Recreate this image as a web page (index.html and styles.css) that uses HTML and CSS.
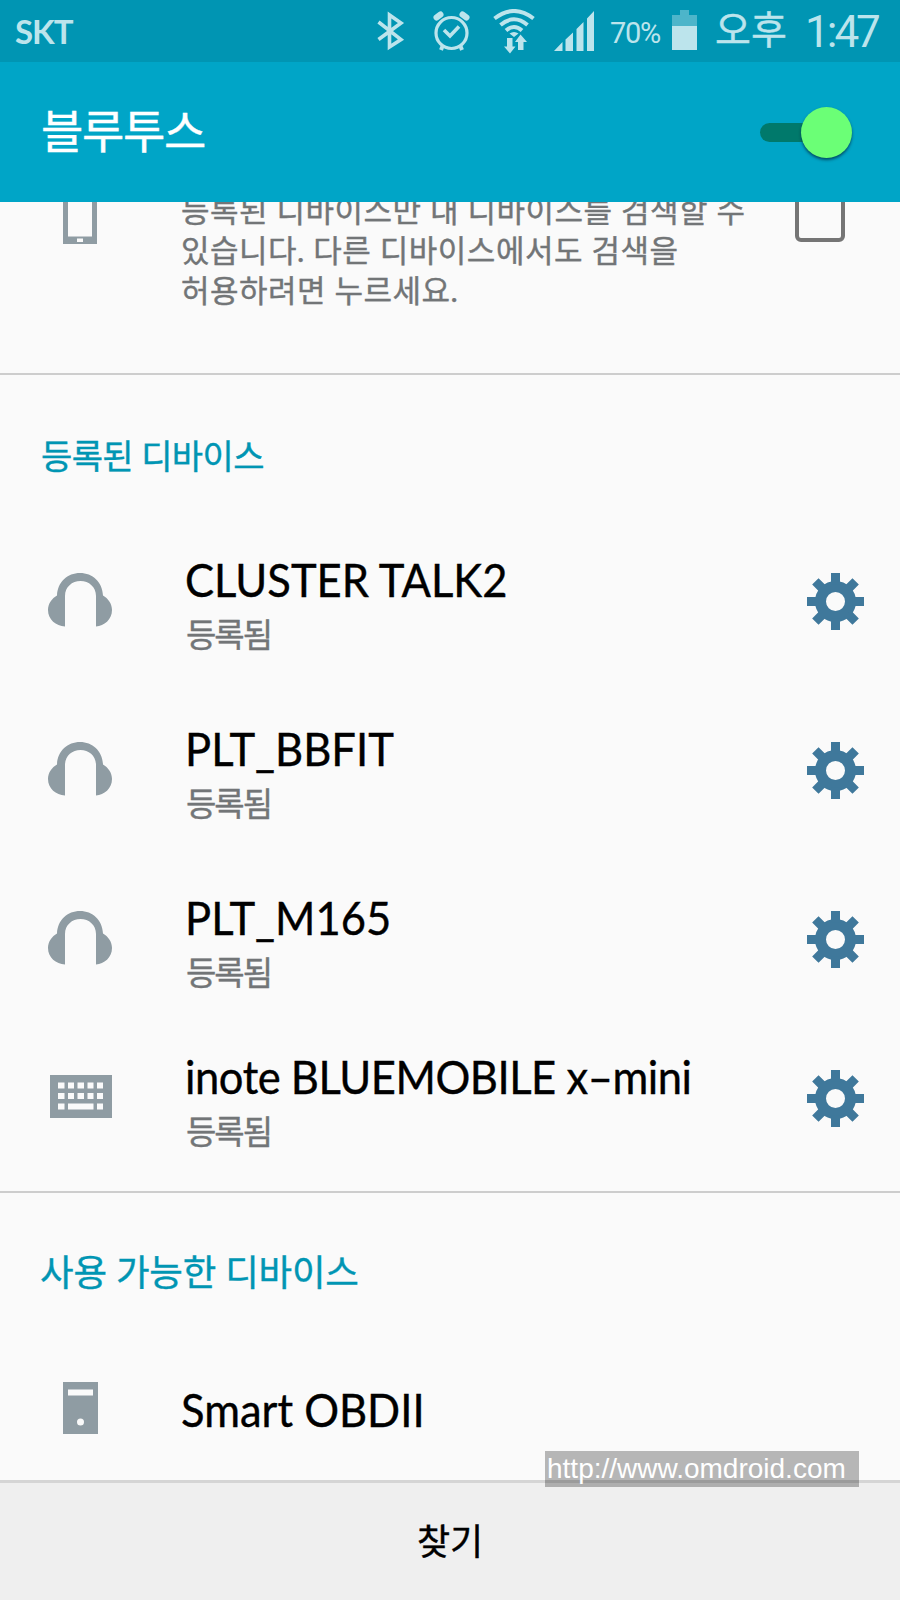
FILE: index.html
```html
<!DOCTYPE html>
<html lang="ko">
<head>
    <meta charset="UTF-8">
    <meta name="viewport" content="width=device-width, initial-scale=1.0">
    <title>블루투스</title>
    <link rel="stylesheet" href="styles.css">
</head>
<body>
<!-- Shared icons -->
<svg class="sprite" width="0" height="0">
    <symbol id="headset" viewBox="0 0 64 54">
        <path d="M17 53.500C8 53 0 46.500 0 37C0 30.500 4 25.500 9 22.500C9.500 9 19.500 0 32 0S54.500 9 55 22.500C60 25.500 64 30.500 64 37C64 46.500 56 53 48 53.500V23C48 14 41 8 32.500 8S17 14 17 23Z"/>
    </symbol>
    <symbol id="keyboard" viewBox="0 0 62 43">
        <path fill-rule="evenodd" d="M0 0H62V43H0ZM8 7.500v6h6.500v-6ZM18 7.500v6h6v-6ZM27.500 7.500v6h6.500v-6ZM37.500 7.500v6h6v-6ZM47 7.500v6h6v-6ZM8 18v6h6.500v-6ZM18 18v6h6v-6ZM27.500 18v6h6.500v-6ZM37.500 18v6h6v-6ZM47 18v6h6v-6ZM8 28.500v6h6.500v-6ZM18 28.500v6h25.500v-6ZM47 28.500v6h6v-6Z"/>
    </symbol>
    <symbol id="gear" viewBox="-28.500 -28.500 57 57">
        <circle r="15" fill="none" stroke="currentColor" stroke-width="11"/>
        <path d="M-4.500-28.500h9V-17h-9ZM-4.500 17h9v11.500h-9ZM-28.500-4.500V4.500H-17v-9ZM17-4.500V4.500H28.500v-9Z"/>
        <path transform="rotate(45)" d="M-4.500-28.500h9V-17h-9ZM-4.500 17h9v11.500h-9ZM-28.500-4.500V4.500H-17v-9ZM17-4.500V4.500H28.500v-9Z"/>
    </symbol>
</svg>

<div id="statusbar">
    <span class="carrier">SKT</span>
    <svg class="bluetooth" width="28" height="40" viewBox="0 0 28 40">
        <path fill="none" stroke="currentColor" stroke-width="3.600" d="M1.500 11L24 28.500L12.500 36V4L24 12L1.500 28.500"/>
    </svg>
    <svg class="alarm" width="37" height="40" viewBox="0 0 37 40">
        <g fill="none" stroke="currentColor">
            <circle cx="18.500" cy="22" r="15.500" stroke-width="3.200"/>
            <path stroke-width="3.600" d="M11 19L17 25L26 15.500"/>
            <path stroke-width="6" stroke-linecap="round" d="M3.500 6.500L7.500 3.500M29.500 3.500L33.500 6.500"/>
            <path stroke-width="4" d="M10 34L8 39M27 34L29 39"/>
        </g>
    </svg>
    <svg class="wifi" width="42" height="45" viewBox="0 0 42 45">
        <g fill="none" stroke="currentColor" stroke-width="4">
            <path d="M1.500 9.500Q21-5.500 40.500 9.500"/>
            <path d="M7.500 16Q21 4.500 34.500 16"/>
            <path d="M13 21.500Q21 14.500 29 21.500"/>
        </g>
        <path fill="currentColor" d="M21 28L16.500 24.500Q21 21.500 25.500 24.500ZM14 29h5.500v8.500h3L17 44.500L11 37.500h3ZM25 41h5.500V33h3.500L27.500 25.500L22 33h3Z"/>
    </svg>
    <svg class="signal" width="41" height="40" viewBox="0 0 41 40">
        <path fill="currentColor" d="M0 40L8.500 31V40ZM11.500 28.500L19 21.500V40H11.500ZM22.500 18L29.500 11V40H22.500ZM33 7.500L40 0V40H33Z"/>
    </svg>
    <span class="percent">70%</span>
    <svg class="battery" width="25" height="40" viewBox="0 0 25 40">
        <path fill="#4db5ca" d="M0 5H8V0H17V5H25V16H0Z"/>
        <path fill="currentColor" d="M0 16H25V40H0Z"/>
    </svg>
    <span class="ampm">오후</span>
    <span class="clock">1:47</span>
</div>

<div id="header">
    <h1>블루투스</h1>
    <div class="switch"><div class="thumb"></div></div>
</div>

<div id="container">
    <div class="visibility">
        <div class="icon">
            <svg width="34" height="64" viewBox="0 0 34 64">
                <path fill-rule="evenodd" d="M0 0H34V64H0ZM5 8V56.500H29V8ZM14 58.500v3.500h6v-3.500Z"/>
            </svg>
        </div>
        <p>등록된 디바이스만 내 디바이스를 검색할 수<br>있습니다. 다른 디바이스에서도 검색을<br>허용하려면 누르세요.</p>
        <div class="checkbox"></div>
    </div>

    <h2 class="paired-title">등록된 디바이스</h2>
    <div class="devices">
        <div class="device">
            <div class="icon"><svg width="64" height="54"><use href="#headset"/></svg></div>
            <div class="info">
                <div class="name">CLUSTER TALK2</div>
                <div class="state">등록됨</div>
            </div>
            <svg class="gear" width="57" height="57"><use href="#gear"/></svg>
        </div>
        <div class="device">
            <div class="icon"><svg width="64" height="54"><use href="#headset"/></svg></div>
            <div class="info">
                <div class="name">PLT_BBFIT</div>
                <div class="state">등록됨</div>
            </div>
            <svg class="gear" width="57" height="57"><use href="#gear"/></svg>
        </div>
        <div class="device">
            <div class="icon"><svg width="64" height="54"><use href="#headset"/></svg></div>
            <div class="info">
                <div class="name">PLT_M165</div>
                <div class="state">등록됨</div>
            </div>
            <svg class="gear" width="57" height="57"><use href="#gear"/></svg>
        </div>
        <div class="device short">
            <div class="icon"><svg width="62" height="43"><use href="#keyboard"/></svg></div>
            <div class="info">
                <div class="name">inote BLUEMOBILE x–mini</div>
                <div class="state">등록됨</div>
            </div>
            <svg class="gear" width="57" height="57"><use href="#gear"/></svg>
        </div>
    </div>

    <h2 class="available-title">사용 가능한 디바이스</h2>
    <div class="device available">
        <div class="icon">
            <svg width="35" height="52" viewBox="0 0 35 52">
                <path fill-rule="evenodd" d="M0 0H35V52H0ZM5 7.500V13.500H30V7.500ZM14 40a3.500 3.500 0 1 0 7 0a3.500 3.500 0 1 0-7 0Z"/>
            </svg>
        </div>
        <div class="name">Smart OBDII</div>
    </div>
</div>

<div id="footer">
    <button>찾기</button>
    <div class="watermark">http://www.omdroid.com</div>
</div>
</body>
</html>
```
FILE: styles.css
```css
* {
    box-sizing: border-box;
}

body {
    display: flex;
    flex-direction: column;
    width: 900px;
    height: 1600px;
    margin: 0;
    overflow: hidden;
    background-color: #fafafa;
    font-family: Lato, 'Noto Sans CJK KR', sans-serif;
}

h1, h2, p {
    margin: 0;
    font-weight: 400;
    white-space: nowrap;
}

h1, h2, p, .state, .name, .ampm, #footer button {
    -webkit-text-stroke: 0.4px currentColor;
}

svg {
    display: block;
    flex: none;
}

.sprite {
    position: absolute;
}

#statusbar {
    display: flex;
    align-items: center;
    flex: none;
    height: 62px;
    padding-left: 15px;
    background-color: #0095b3;
    color: #bce4ec;
    white-space: nowrap;
    line-height: 62px;
}

.carrier {
    width: 362px;
    font-size: 33px;
    font-weight: 700;
    letter-spacing: -1px;
}

.alarm {
    margin-left: 28px;
}

.wifi {
    margin-left: 23px;
}

.signal {
    margin-left: 19px;
}

.percent {
    width: 62px;
    margin-left: 15px;
    padding-top: 3px;
    font-family: Roboto, sans-serif;
    font-size: 29px;
    letter-spacing: -1.3px;
}

.battery {
    margin-top: -2px;
}

.ampm {
    width: 90px;
    margin-left: 18px;
    padding-bottom: 4px;
    font-size: 39px;
}

.clock {
    padding-top: 2px;
    font-family: Roboto, sans-serif;
    font-size: 44px;
    letter-spacing: -3px;
}

#header {
    display: flex;
    align-items: center;
    justify-content: space-between;
    flex: none;
    height: 140px;
    padding: 0 48px 0 41px;
    background-color: #00a5c7;
}

#header h1 {
    color: #fff;
    font-size: 46px;
    line-height: 138px;
    height: 140px;
    letter-spacing: -1.3px;
}

.switch {
    position: relative;
    width: 92px;
    height: 19px;
    border-radius: 10px;
    background-color: #00796b;
}

.thumb {
    position: absolute;
    top: -16px;
    right: 0;
    width: 51px;
    height: 51px;
    border-radius: 50%;
    background-color: #6bff76;
    box-shadow: 0 2px 3px rgba(0, 40, 60, 0.7);
}

#container {
    flex: 1;
}

.icon {
    display: flex;
    justify-content: center;
    width: 160px;
    color: #8f9ca3;
    fill: currentColor;
}

/* Scrolled under the header, so the content hangs from the bottom */
.visibility {
    display: flex;
    align-items: flex-end;
    height: 173px;
    overflow: hidden;
    border-bottom: 2px solid #cdcdcd;
}

.visibility .icon {
    margin-bottom: 129px;
}

.visibility p {
    width: 635px;
    padding: 0 0 63px 21px;
    color: #727577;
    font-size: 31px;
    line-height: 40px;
    letter-spacing: 0.5px;
}

.checkbox {
    width: 50px;
    height: 50px;
    margin-bottom: 131px;
    border: 4px solid #757575;
    border-radius: 6px;
}

h2 {
    padding-left: 41px;
    color: #0095b3;
    font-size: 34px;
}

.paired-title {
    height: 142px;
    line-height: 162px;
    letter-spacing: -0.6px;
}

.devices {
    padding-bottom: 18px;
    border-bottom: 2px solid #cdcdcd;
}

.device {
    display: flex;
    align-items: center;
    height: 169px;
}

.device.short {
    height: 149px;
}

.device .icon {
    margin-top: -4px;
}

.device.short .icon {
    padding-left: 1px;
}

.info {
    width: 622px;
    padding: 5px 0 0 25px;
}

.name {
    height: 58px;
    color: #000;
    font-size: 47px;
    line-height: 58px;
    white-space: nowrap;
    transform: scaleX(0.926);
    transform-origin: left;
}

.short .name {
    letter-spacing: -0.5px;
}

.state {
    height: 50px;
    padding-left: 1px;
    color: #727577;
    font-size: 33px;
    line-height: 52px;
    letter-spacing: -2px;
}

.gear {
    margin-left: 25px;
    color: #3f789b;
    fill: currentColor;
}

.available-title {
    height: 142px;
    padding-left: 40px;
    font-size: 36.5px;
    line-height: 158px;
    letter-spacing: -0.2px;
}

.device.available {
    height: 145px;
}

.available .icon {
    width: 161px;
    margin-top: 0;
}

.available .name {
    margin: 3px 0 0 20px;
}

#footer {
    position: relative;
    flex: none;
    height: 120px;
    border-top: 3px solid #d5d5d5;
    background-color: #efefef;
}

#footer button {
    display: block;
    width: 100%;
    height: 111px;
    padding: 0;
    border: none;
    background: none;
    color: #000;
    font-family: inherit;
    font-size: 36px;
}

.watermark {
    position: absolute;
    top: -32px;
    left: 545px;
    width: 314px;
    height: 36px;
    padding-left: 2px;
    background-color: rgba(0, 0, 0, 0.27);
    color: #fff;
    font-family: 'Liberation Sans', sans-serif;
    font-size: 28px;
    line-height: 35px;
}
```
